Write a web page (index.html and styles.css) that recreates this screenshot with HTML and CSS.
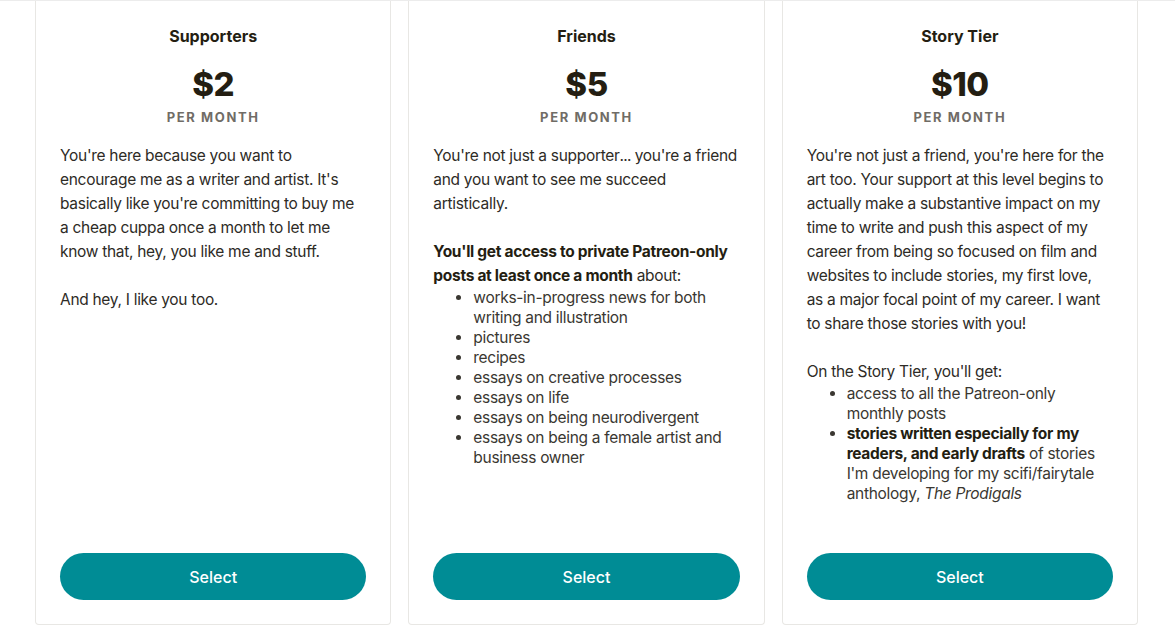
FILE: index.html
```html
<!DOCTYPE html>
<html>
<head>
<meta charset="utf-8">
<link rel="stylesheet" href="styles.css">
</head>
<body>
<div class="tiers">
  <div class="card">
    <div class="title">Supporters</div>
    <div class="price">$2</div>
    <div class="per">PER MONTH</div>
    <div class="desc">
      <p>You're here because you want to encourage me as a writer and artist. It's basically like you're committing to buy me a cheap cuppa once a month to let me know that, hey, you like me and stuff.</p>
      <p>And hey, I like you too.</p>
    </div>
    <button class="select">Select</button>
  </div>
  <div class="card">
    <div class="title">Friends</div>
    <div class="price">$5</div>
    <div class="per">PER MONTH</div>
    <div class="desc desc-wide">
      <p>You're not just a supporter<span class="ell">...</span> you're a friend and you want to see me succeed artistically.</p>
      <p><strong>You'll get access to private Patreon-only posts at least once a month</strong> about:</p>
      <ul>
        <li>works-in-progress news for both writing and illustration</li>
        <li>pictures</li>
        <li>recipes</li>
        <li>essays on creative processes</li>
        <li>essays on life</li>
        <li>essays on being neurodivergent</li>
        <li>essays on being a female artist and business owner</li>
      </ul>
    </div>
    <button class="select">Select</button>
  </div>
  <div class="card">
    <div class="title">Story Tier</div>
    <div class="price">$10</div>
    <div class="per">PER MONTH</div>
    <div class="desc">
      <p>You're not just a friend, you're here for the art too. Your support at this level begins to actually make a substantive impact on my time to write and push this aspect of my career from being so focused on film and websites to include stories, my first love, as a major focal point of my career. I want to share those stories with you!</p>
      <p>On the Story Tier, you'll get:</p>
      <ul>
        <li>access to all the Patreon-only monthly posts</li>
        <li><strong>stories written especially for my readers, and early drafts</strong> of stories I'm developing for my scifi/fairytale anthology, <em>The Prodigals</em></li>
      </ul>
    </div>
    <button class="select">Select</button>
  </div>
</div>
</body>
</html>
```
FILE: styles.css
```css
html, body {
  margin: 0;
  padding: 0;
  background: #ffffff;
}
body {
  font-family: Inter, "Liberation Sans", sans-serif;
  color: #241e12;
  border-top: 1px solid #ececec;
}
.tiers {
  display: flex;
  gap: 17px;
  padding: 0 37px 0 35px;
  height: 624px;
  box-sizing: border-box;
}
.card {
  flex: 1;
  min-width: 0;
  display: flex;
  flex-direction: column;
  border: 1px solid #e8e7e4;
  border-top: none;
  border-radius: 0 0 4px 4px;
  padding: 23px 24px 24px;
  box-sizing: border-box;
}
.title {
  text-align: center;
  font-size: 16px;
  font-weight: 700;
  line-height: 24px;
}
.price {
  text-align: center;
  font-size: 33px;
  font-weight: 800;
  line-height: 40px;
  margin-top: 16px;
  letter-spacing: -0.5px;
}
.per {
  text-align: center;
  font-size: 13px;
  font-weight: 700;
  letter-spacing: 1.6px;
  color: #706c66;
  line-height: 16px;
  margin-top: 5px;
}
.desc {
  margin-top: 19px;
  margin-right: 3px;
  font-size: 15.5px;
  line-height: 24px;
  color: #2e2b26;
  letter-spacing: -0.3px;
}
.desc-wide {
  margin-right: 0;
}
.ell {
  letter-spacing: -0.8px;
}
.desc p {
  margin: 0 0 24px;
}
.desc p:last-child {
  margin-bottom: 0;
}
.desc p + ul {
  margin-top: -24px;
}
.desc strong {
  font-weight: 700;
  color: #241e12;
}
.desc ul {
  margin: 0;
  padding-left: 40px;
  line-height: 20px;
  color: #3a3731;
}
.select {
  margin-top: auto;
  height: 47px;
  border: none;
  border-radius: 24px;
  background: #008c95;
  color: #ffffff;
  font-family: Inter, "Liberation Sans", sans-serif;
  font-size: 16px;
  font-weight: 500;
}
```
